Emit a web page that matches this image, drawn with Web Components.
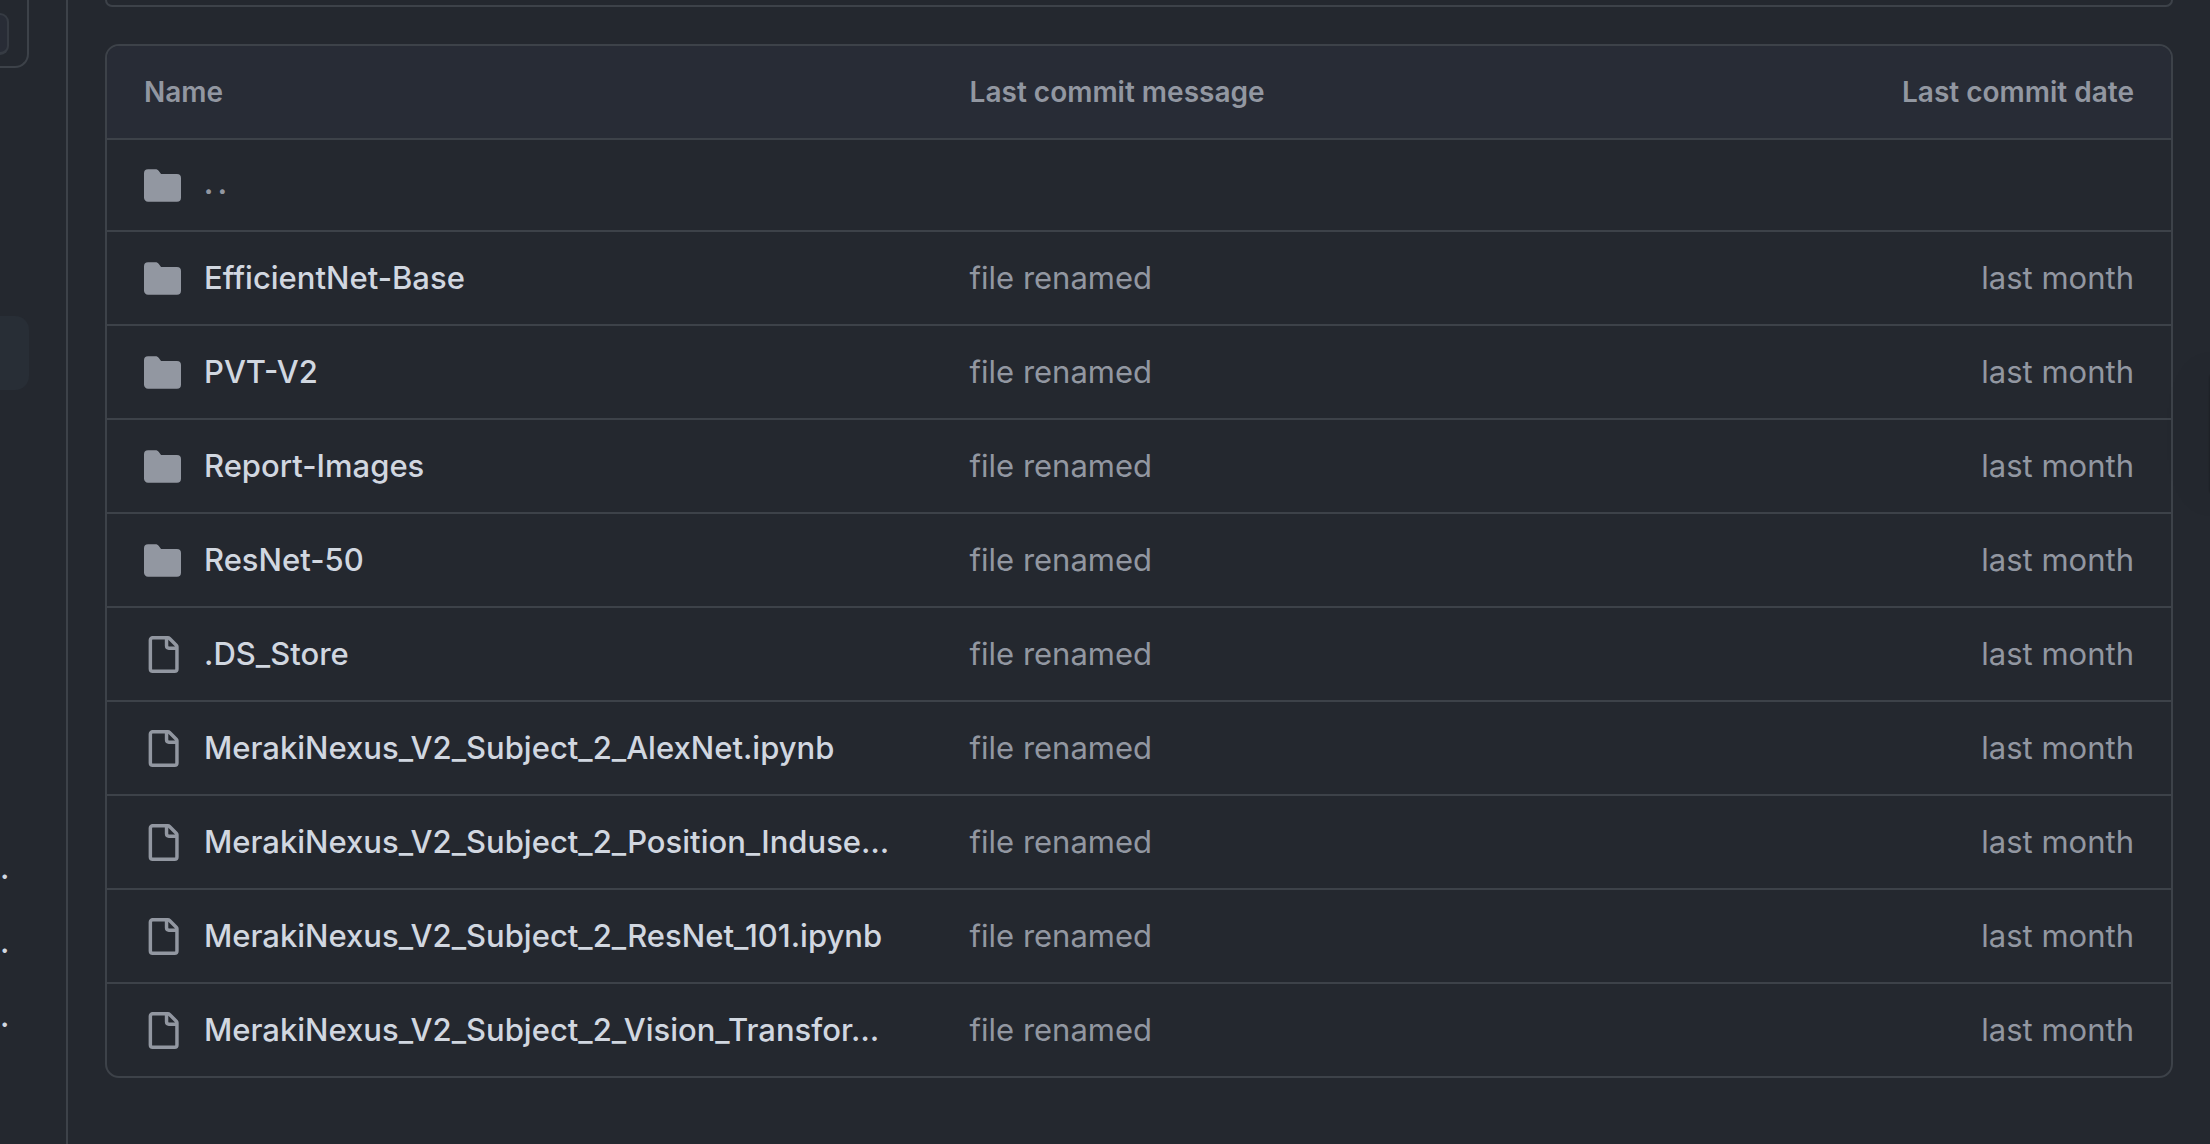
<!DOCTYPE html>
<html lang="en">
<head>
<meta charset="utf-8">
<title>Repository files</title>
<style>
  body { margin: 0; background: #24282f; }
</style>
</head>
<body>
<repo-page></repo-page>
<script>
const ICONS = {
  folder: '<path d="M1.75 1A1.75 1.75 0 0 0 0 2.75v10.5C0 14.216.784 15 1.75 15h12.5A1.75 1.75 0 0 0 16 13.25v-8.5A1.75 1.75 0 0 0 14.25 3H7.5a.25.25 0 0 1-.2-.1l-.9-1.2C6.07 1.26 5.55 1 5 1H1.75Z"/>',
  file: '<path d="M2 1.75C2 .784 2.784 0 3.75 0h6.586c.464 0 .909.184 1.237.513l2.914 2.914c.329.328.513.773.513 1.237v9.586A1.75 1.75 0 0 1 13.25 16h-9.5A1.75 1.75 0 0 1 2 14.25Zm1.75-.25a.25.25 0 0 0-.25.25v12.5c0 .138.112.25.25.25h9.5a.25.25 0 0 0 .25-.25V6h-2.75A1.75 1.75 0 0 1 9 4.25V1.5Zm6.75.062V4.25c0 .138.112.25.25.25h2.688l-.011-.013-2.914-2.914-.013-.011Z"/>'
};

class FileIcon extends HTMLElement {
  constructor() {
    super();
    this.attachShadow({ mode: 'open' });
  }
  connectedCallback() {
    this.shadowRoot.innerHTML = `
      <style>
        :host { display: block; flex: none; width: 37px; height: 37px; color: #9297a1; }
        svg { display: block; fill: currentColor; }
      </style>
      <svg width="37" height="37" viewBox="0 0 16 16" aria-hidden="true">${ICONS[this.getAttribute('kind')]}</svg>`;
  }
}
customElements.define('file-icon', FileIcon);

class SideBar extends HTMLElement {
  constructor() {
    super();
    this.attachShadow({ mode: 'open' }).innerHTML = `
      <style>
        :host { display: block; box-sizing: border-box; width: 68px; border-right: 2px solid #3d4249; padding-right: 37px; }
        .search { box-sizing: border-box; height: 68px; border: 2px solid #3d4249; border-width: 0 2px 2px 0; border-radius: 0 0 14px 0; width: 29px; padding-top: 13px; }
        .key { box-sizing: border-box; width: 9px; height: 42px; border: 2px solid #363b43; border-left: 0; border-bottom-width: 3px; border-radius: 0 12px 12px 0; background: #282c36; }
        .current { width: 29px; height: 74px; margin-top: 248px; border-radius: 0 14px 14px 0; background: #282e36; }
        ul { list-style: none; margin: 441px 0 0; padding: 0; color: #d1d7e0; font: 500 31px/74px Inter, sans-serif; }
      </style>
      <div class="search"><div class="key"></div></div>
      <div class="current"></div>
      <ul><li>.</li><li>.</li><li>.</li></ul>`;
  }
}
customElements.define('side-bar', SideBar);

const FILES = [
  ['folder', 'EfficientNet-Base'],
  ['folder', 'PVT-V2'],
  ['folder', 'Report-Images'],
  ['folder', 'ResNet-50'],
  ['file', '.DS_Store'],
  ['file', 'MerakiNexus_V2_Subject_2_AlexNet.ipynb'],
  ['file', 'MerakiNexus_V2_Subject_2_Position_Induse…'],
  ['file', 'MerakiNexus_V2_Subject_2_ResNet_101.ipynb'],
  ['file', 'MerakiNexus_V2_Subject_2_Vision_Transfor…']
];

class FileTable extends HTMLElement {
  constructor() {
    super();
    const rows = FILES.map(([kind, name]) => `
      <tr>
        <td><div class="name"><file-icon kind="${kind}"></file-icon><a href="#">${name}</a></div></td>
        <td><a href="#" class="muted">file renamed</a></td>
        <td class="date">last month</td>
      </tr>`).join('');
    this.attachShadow({ mode: 'open' }).innerHTML = `
      <style>
        :host { display: block; border: 2px solid #3d4249; border-radius: 14px; overflow: hidden; }
        table { width: 100%; border-collapse: separate; border-spacing: 0; table-layout: fixed; font: 400 31px/50px Inter, sans-serif; color: #9297a1; }
        th, td { box-sizing: border-box; height: 94px; padding: 0 37px; text-align: left; vertical-align: middle; border-bottom: 2px solid #3d4249; white-space: nowrap; }
        th { background: #282c36; font-size: 28px; font-weight: 600; }
        th:first-child { width: 40%; }
        th:last-child { width: 20%; }
        .up td { height: 92px; }
        .up a { font-size: 26px; font-weight: 800; }
        tbody tr:last-child td { height: 92px; border-bottom: 0; }
        th:last-child, .date { text-align: right; }
        .name { display: flex; align-items: center; gap: 23px; font-weight: 450; }
        a { color: #d1d7e0; text-decoration: none; }
        a.muted { color: inherit; }
      </style>
      <table>
        <thead><tr><th>Name</th><th>Last commit message</th><th>Last commit date</th></tr></thead>
        <tbody>
          <tr class="up"><td colspan="3"><div class="name"><file-icon kind="folder"></file-icon><a href="#" class="muted">. .</a></div></td></tr>
          ${rows}
        </tbody>
      </table>`;
  }
}
customElements.define('file-table', FileTable);

class RepoPage extends HTMLElement {
  constructor() {
    super();
    this.attachShadow({ mode: 'open' }).innerHTML = `
      <style>
        :host { display: flex; min-height: 100vh; }
        side-bar { flex: none; }
        main { flex: 1; min-width: 0; padding: 0 37px; display: flex; flex-direction: column; gap: 37px; }
        .panel { box-sizing: border-box; height: 7px; border: 2px solid #3d4249; border-top: 0; border-radius: 0 0 14px 14px; }
        .drawer { position: fixed; top: 374px; right: -8px; width: 8px; height: 120px; border-radius: 8px; box-shadow: 0 0 3px rgba(0, 0, 0, .4), 0 0 50px rgba(0, 0, 0, .15); }
      </style>
      <side-bar></side-bar>
      <main><div class="panel"></div><file-table></file-table></main>
      <div class="drawer"></div>`;
  }
}
customElements.define('repo-page', RepoPage);
</script>
</body>
</html>
